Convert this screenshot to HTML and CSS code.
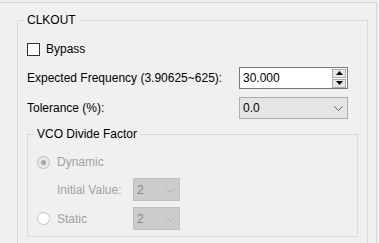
FILE: index.html
```html
<!DOCTYPE html>
<html lang="en">
<head>
    <meta charset="UTF-8">
    <title>CLKOUT</title>
    <link rel="stylesheet" href="styles.css">
</head>
<body>

<div class="panel">
    <fieldset class="group">
        <legend>CLKOUT</legend>

        <label class="check-row">
            <span class="checkbox"></span>
            <span>Bypass</span>
        </label>

        <div class="form-grid">
            <span class="label">Expected Frequency (3.90625~625):</span>
            <div class="spinbox">
                <span class="spin-value">30.000</span>
                <div class="spin-buttons">
                    <span class="spin-btn"><svg width="7" height="4" viewBox="0 0 7 4"><path d="M3.5 0 L7 4 L0 4 Z" fill="#000"/></svg></span>
                    <span class="spin-btn"><svg width="7" height="4" viewBox="0 0 7 4"><path d="M0 0 L7 0 L3.5 4 Z" fill="#000"/></svg></span>
                </div>
            </div>

            <span class="label">Tolerance (%):</span>
            <div class="combo">
                <span>0.0</span>
                <svg class="chevron" width="9" height="5" viewBox="0 0 9 5"><path d="M0.5 0.5 L4.5 4.5 L8.5 0.5" fill="none" stroke="#5a5a5a" stroke-width="1"/></svg>
            </div>
        </div>

        <fieldset class="group sub-group">
            <legend>VCO Divide Factor</legend>

            <div class="vco-grid">
                <label class="radio-row wide disabled">
                    <span class="radio checked"></span>
                    <span>Dynamic</span>
                </label>

                <span class="label indent disabled">Initial Value:</span>
                <div class="combo combo-disabled">
                    <span>2</span>
                    <svg class="chevron" width="9" height="5" viewBox="0 0 9 5"><path d="M0.5 0.5 L4.5 4.5 L8.5 0.5" fill="none" stroke="#b0b0b0" stroke-width="1"/></svg>
                </div>

                <label class="radio-row disabled">
                    <span class="radio"></span>
                    <span>Static</span>
                </label>
                <div class="combo combo-disabled">
                    <span>2</span>
                    <svg class="chevron" width="9" height="5" viewBox="0 0 9 5"><path d="M0.5 0.5 L4.5 4.5 L8.5 0.5" fill="none" stroke="#b0b0b0" stroke-width="1"/></svg>
                </div>
            </div>
        </fieldset>
    </fieldset>
</div>

</body>
</html>
```

FILE: styles.css
```css
html, body { height: 243px; }
body { margin: 0; background: #f0f0f0; color: #000; font-family: 'Liberation Sans', Arial, sans-serif; font-size: 12px; overflow: hidden; }

/* Outer frame */
.panel { margin-top: 2px; width: 376px; height: 241px; overflow: hidden; border-top: 1px solid #d4d4d4; border-right: 1px solid #d4d4d4; }

/* Group boxes */
.group { margin: 9px 8px 0 17px; padding: 11px 9px 20px 9px; border: 1px solid #d9d9d9; min-width: 0; }
.group legend { margin-left: -3px; padding: 0 3px; line-height: 16px; }
.sub-group { margin: 7px 0 0 0; padding: 10px 9px 6px 9px; border-color: #dadada; }

/* Checkbox */
.check-row { display: flex; align-items: center; gap: 6px; height: 20px; }
.checkbox { width: 11px; height: 11px; border: 1px solid #333; background: #fff; }

/* Form rows */
.form-grid { display: grid; grid-template-columns: 212px 109px; row-gap: 8px; margin-top: 8px; align-items: center; }
.label { line-height: 16px; }

.spinbox { height: 20px; border: 1px solid #7a7a7a; background: #fff; display: flex; align-items: center; justify-content: space-between; padding-left: 3px; }
.spin-buttons { display: flex; flex-direction: column; gap: 1px; margin-right: 1px; }
.spin-btn { width: 12px; height: 7px; border: 1px solid #adadad; background: #e8e8e8; display: flex; align-items: center; justify-content: center; }

.combo { height: 20px; border: 1px solid #adadad; background: #e5e5e5; display: flex; align-items: center; justify-content: space-between; padding: 0 4px 0 3px; }
.chevron { margin-top: 1px; }

/* VCO section */
.vco-grid { display: grid; grid-template-columns: 96px 47px; row-gap: 6px; align-items: center; }
.wide { grid-column: 1 / 3; }
.indent { padding-left: 20px; }
.disabled { color: #a0a0a0; }

.radio-row { display: flex; align-items: center; gap: 7px; height: 20px; }
.radio { width: 11px; height: 11px; border: 1px solid #c4c4c4; border-radius: 50%; background: #fff; display: flex; align-items: center; justify-content: center; }
.radio.checked { background: #e8e8e8; border-color: #bcbcbc; }
.radio.checked::after { content: ""; width: 5px; height: 5px; border-radius: 50%; background: #a8a8a8; }

.combo-disabled { height: 21px; background: #cccccc; border-color: #bfbfbf; color: #858585; padding-left: 3px; }
```
